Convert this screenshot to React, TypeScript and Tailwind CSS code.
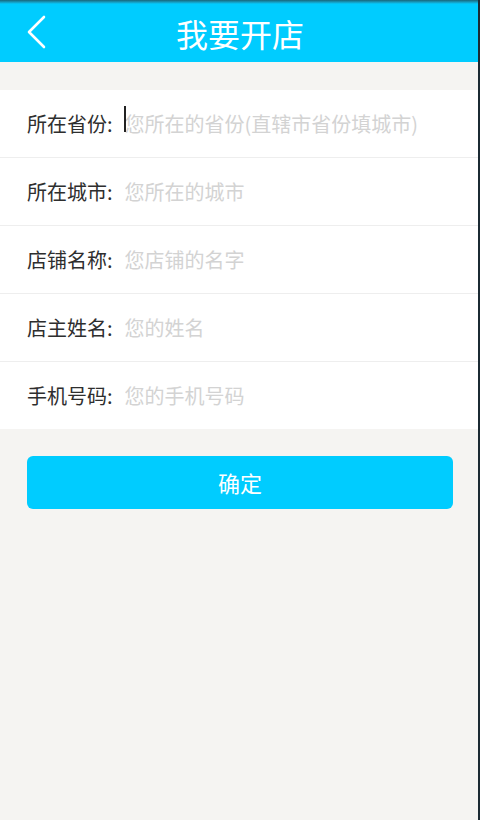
import { useState } from 'react'

const fields = [
  { label: '所在省份', placeholder: '您所在的省份(直辖市省份填城市)' },
  { label: '所在城市', placeholder: '您所在的城市' },
  { label: '店铺名称', placeholder: '您店铺的名字' },
  { label: '店主姓名', placeholder: '您的姓名' },
  { label: '手机号码', placeholder: '您的手机号码' },
]

const font = { fontFamily: '"Noto Sans CJK SC", "Noto Sans", sans-serif' }

function BackIcon() {
  return (
    <svg width="24" height="36" viewBox="0 0 24 36" fill="none">
      <path d="M19 3 L4 18 L19 33" stroke="white" strokeWidth="2.6" strokeLinecap="round" strokeLinejoin="round" />
    </svg>
  )
}

function FieldRow({ label, placeholder, focused }: { label: string; placeholder: string; focused?: boolean }) {
  const [value, setValue] = useState('')
  return (
    <label className="flex h-[68px] items-center border-b border-[#eeeeee] pl-[27px] last:h-[67px] last:border-b-0">
      <span className="shrink-0 text-[20px] text-[#2e2e2e]">{label}:</span>
      <span className="relative ml-[12px] flex flex-1 items-center">
        {focused && <span className="absolute left-[-1px] top-[-3px] h-[26px] w-[2px] bg-[#222]" />}
        <input
          value={value}
          onChange={(e) => setValue(e.target.value)}
          placeholder={placeholder}
          className="w-full bg-transparent text-[20px] text-[#333] outline-none placeholder:text-[#d3d3d3]"
          style={font}
        />
      </span>
    </label>
  )
}

export default function App() {
  return (
    <div className="flex min-h-[820px] w-[480px] flex-col bg-[#f5f4f2]" style={font}>
      <header className="relative flex h-[62px] shrink-0 items-center justify-center bg-[#00ccff]">
        <div className="absolute left-0 right-0 top-0 h-[4px] bg-gradient-to-b from-[#17667a] to-[#00ccff]" />
        <button className="absolute left-[25px] top-[14px]">
          <BackIcon />
        </button>
        <h1 className="mt-[4px] text-[32px] text-white">我要开店</h1>
      </header>
      <div className="mt-[28px] bg-white">
        {fields.map((f, i) => (
          <FieldRow key={f.label} label={f.label} placeholder={f.placeholder} focused={i === 0} />
        ))}
      </div>
      <div className="px-[27px] pt-[27px]">
        <button className="flex h-[53px] w-full items-center justify-center rounded-[6px] bg-[#00ccff] text-[22px] text-white">
          确定
        </button>
      </div>
      <div className="fixed bottom-0 right-0 top-0 w-[2px] bg-[#1b2a33]" />
    </div>
  )
}
